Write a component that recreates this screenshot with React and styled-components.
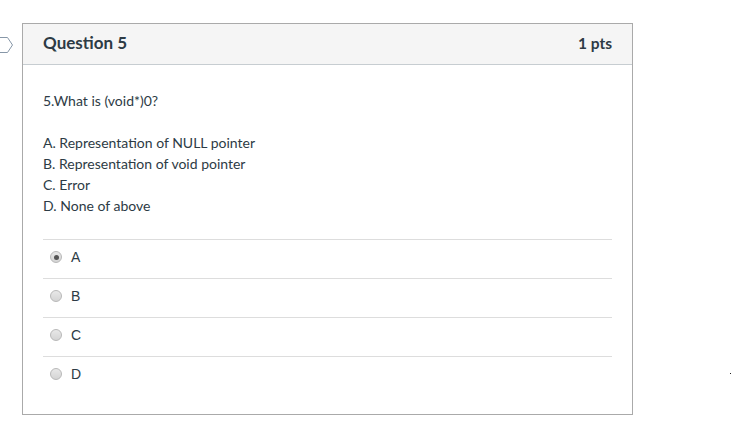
import React from 'react';
import styled, { createGlobalStyle } from 'styled-components';

const GlobalStyle = createGlobalStyle`
  body {
    margin: 0;
    background: #fff;
    font-family: Lato, "Helvetica Neue", Arial, sans-serif;
    color: #2d3b45;
  }
`;

const Page = styled.div`
  position: relative;
  width: 731px;
  height: 434px;
  padding: 23px 0 0 22px;
  box-sizing: border-box;
`;

const Marker = styled.svg`
  position: absolute;
  left: 0;
  top: 37px;
`;

const Speck = styled.span`
  position: absolute;
  left: 730px;
  top: 373px;
  width: 1px;
  height: 1px;
  background: #222;
`;

const Card = styled.div`
  width: 611px;
  box-sizing: border-box;
  border: 1px solid #aaa;
  background: #fff;
`;

const Header = styled.div`
  display: flex;
  justify-content: space-between;
  align-items: center;
  height: 41px;
  box-sizing: border-box;
  padding: 0 20px 3px;
  background: #f5f5f5;
  border-bottom: 1px solid #c7cdd1;
`;

const Title = styled.h2`
  margin: 0;
  font-size: 17px;
  font-weight: 700;
  color: #2d3b45;
`;

const Points = styled.span`
  font-size: 15.5px;
  font-weight: 700;
  color: #2d3b45;
`;

const Body = styled.div`
  padding: 25px 20px 19px;
`;

const Text = styled.p`
  margin: 0 0 ${p => p.$gap || 0}px;
  font-size: 14px;
  line-height: 21px;
  color: #2d3b45;
`;

const Answers = styled.div`
  margin-top: 23px;
`;

const Answer = styled.label`
  display: flex;
  align-items: center;
  gap: 9px;
  height: 39px;
  box-sizing: border-box;
  padding: 0 0 4px 7px;
  border-top: 1px solid #ddd;
  font-family: "Liberation Sans", Arial, sans-serif;
  font-size: 14px;
  color: #2d3b45;
`;

const Radio = styled.span`
  position: relative;
  width: 12px;
  height: 12px;
  box-sizing: border-box;
  border-radius: 50%;
  border: 1px solid #b8b8b8;
  background: linear-gradient(#e8e8e8, #d4d4d4);
  flex-shrink: 0;

  &::after {
    content: '';
    display: ${p => (p.$checked ? 'block' : 'none')};
    position: absolute;
    left: 2.5px;
    top: 2.5px;
    width: 5px;
    height: 5px;
    border-radius: 50%;
    background: #555;
  }
`;

const App = () => {
  const options = [
    'A. Representation of NULL pointer',
    'B. Representation of void pointer',
    'C. Error',
    'D. None of above',
  ];
  const choices = ['A', 'B', 'C', 'D'];

  return (
    <>
      <GlobalStyle />
      <Page>
        <Marker width="14" height="16" viewBox="0 0 14 16">
          <path d="M-2 0.5 H7.5 L12.5 8 L7.5 15.5 H-2" fill="none" stroke="#8797a8" strokeWidth="1" />
        </Marker>
        <Speck />
        <Card>
          <Header>
            <Title>Question 5</Title>
            <Points>1 pts</Points>
          </Header>
          <Body>
            <Text $gap={21}>5.What is (void*)0?</Text>
            {options.map(o => (
              <Text key={o}>{o}</Text>
            ))}
            <Answers>
              {choices.map((c, i) => (
                <Answer key={c}>
                  <Radio $checked={i === 0} />
                  {c}
                </Answer>
              ))}
            </Answers>
          </Body>
        </Card>
      </Page>
    </>
  );
};

export default App;
